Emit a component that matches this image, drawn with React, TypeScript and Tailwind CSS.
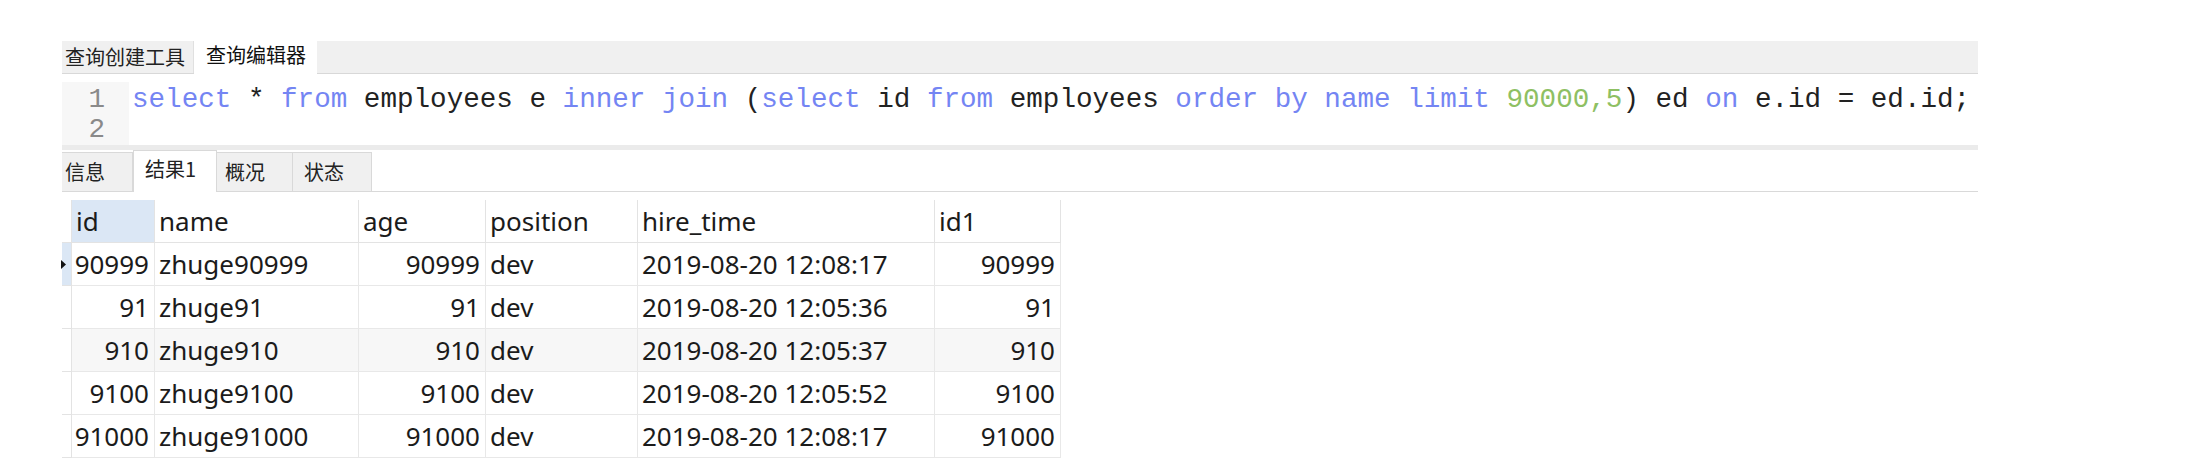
import React from 'react';

const cjk = { fontFamily: '"Noto Sans CJK SC", "Noto Sans", sans-serif' };
const mono = { fontFamily: '"Liberation Mono", "DejaVu Sans Mono", monospace' };
const cell = { fontFamily: '"Noto Sans", "Noto Sans CJK SC", sans-serif' };

const Kw = ({ children }: { children: React.ReactNode }) => <span className="text-[#7485f3]">{children}</span>;
const Num = ({ children }: { children: React.ReactNode }) => <span className="text-[#8ec063]">{children}</span>;

const columns = [
    { key: 'id', label: 'id', w: 'w-[83px]', right: true },
    { key: 'name', label: 'name', w: 'w-[204px]', right: false },
    { key: 'age', label: 'age', w: 'w-[127px]', right: true },
    { key: 'position', label: 'position', w: 'w-[152px]', right: false },
    { key: 'hire_time', label: 'hire_time', w: 'w-[297px]', right: false },
    { key: 'id1', label: 'id1', w: 'w-[126px]', right: true },
];

const rows = [
    { id: '90999', name: 'zhuge90999', age: '90999', position: 'dev', hire_time: '2019-08-20 12:08:17', id1: '90999' },
    { id: '91', name: 'zhuge91', age: '91', position: 'dev', hire_time: '2019-08-20 12:05:36', id1: '91' },
    { id: '910', name: 'zhuge910', age: '910', position: 'dev', hire_time: '2019-08-20 12:05:37', id1: '910' },
    { id: '9100', name: 'zhuge9100', age: '9100', position: 'dev', hire_time: '2019-08-20 12:05:52', id1: '9100' },
    { id: '91000', name: 'zhuge91000', age: '91000', position: 'dev', hire_time: '2019-08-20 12:08:17', id1: '91000' },
];

const ResultTab = ({ label, active, w, pl }: { label: string; active?: boolean; w: string; pl: string }) => (
    <div
        className={`${w} ${pl} flex items-center border-r border-[#d9d9d9] text-[20px] text-[#222] ${
            active ? 'h-[42px] -mb-px bg-white pb-[6px] border-t border-l' : 'h-[39px] bg-[#f0f0f0] border-t'
        }`}
        style={cjk}
    >
        {label}
    </div>
);

export default function App() {
    return (
        <div className="w-[2186px] h-[476px] bg-white overflow-hidden">
            <div className="pt-[41px] pl-[62px] w-[1978px]">
                {/* editor tabs */}
                <div className="flex h-[33px] bg-[#f0f0f0] border-b border-[#d8d8d8] items-end">
                    <div className="w-[132px] h-full flex items-center pl-[3px] text-[20px] text-[#222] border-r border-[#e0e0e0]" style={cjk}>
                        查询创建工具
                    </div>
                    <div className="w-[123px] h-[33px] -mb-px bg-white flex items-center pl-[12px] pb-[6px] text-[20px] text-[#111]" style={cjk}>
                        查询编辑器
                    </div>
                </div>

                {/* editor */}
                <div className="flex h-[63px] mt-[8px]">
                    <div className="w-[67px] bg-[#f7f7f7] pt-[3px] pr-[24px] text-right text-[27.6px] leading-[30px] text-[#8a8a8a]" style={mono}>
                        <div>1</div>
                        <div>2</div>
                    </div>
                    <div className="pl-[3px] pt-[3px] text-[27.6px] leading-[30px] text-[#222] whitespace-pre" style={mono}>
                        <div>
                            <Kw>select</Kw> * <Kw>from</Kw> employees e <Kw>inner join</Kw> (<Kw>select</Kw> id <Kw>from</Kw> employees{' '}
                            <Kw>order by name limit</Kw> <Num>90000,5</Num>) ed <Kw>on</Kw> e.id = ed.id;
                        </div>
                        <div>&nbsp;</div>
                    </div>
                </div>

                <div className="h-[5px] bg-[#ebebeb]" />

                {/* result tabs */}
                <div className="flex items-end h-[42px] border-b border-[#d9d9d9]">
                    <ResultTab label="信息" w="w-[71px]" pl="pl-[3px]" />
                    <ResultTab label="结果1" w="w-[84px]" pl="pl-[11px]" active />
                    <ResultTab label="概况" w="w-[76px]" pl="pl-[8px]" />
                    <ResultTab label="状态" w="w-[79px]" pl="pl-[11px]" />
                </div>

                {/* grid */}
                <div className="mt-[8px] w-fit text-[26px] text-[#1b1b1b]" style={cell}>
                    <div className="flex h-[43px]">
                        <div className="w-[10px] border-r border-b border-[#e3e3e3] bg-white" />
                        {columns.map((c) => (
                            <div
                                key={c.key}
                                className={`${c.w} flex items-center pl-[4px] border-r border-b border-[#e3e3e3] ${
                                    c.key === 'id' ? 'bg-[#dbe7f5]' : 'bg-white'
                                }`}
                            >
                                {c.label}
                            </div>
                        ))}
                    </div>
                    {rows.map((r, i) => (
                        <div key={r.id} className="flex h-[43px]">
                            <div className={`w-[10px] flex items-center border-r border-b border-[#e3e3e3] ${i === 0 ? 'bg-[#dbe7f5]' : 'bg-white'}`}>
                                {i === 0 && (
                                    <svg width="5" height="9" viewBox="0 0 5 9" className="-ml-px">
                                        <path d="M0 0 L5 4.5 L0 9 Z" fill="#111" />
                                    </svg>
                                )}
                            </div>
                            {columns.map((c) => (
                                <div
                                    key={c.key}
                                    className={`${c.w} flex items-center border-r border-b border-[#e8e8e8] ${
                                        i === 2 ? 'bg-[#f7f7f7]' : 'bg-white'
                                    } ${c.right ? 'justify-end pr-[5px]' : 'pl-[4px]'}`}
                                >
                                    {r[c.key as keyof typeof r]}
                                </div>
                            ))}
                        </div>
                    ))}
                </div>
            </div>
        </div>
    );
}
